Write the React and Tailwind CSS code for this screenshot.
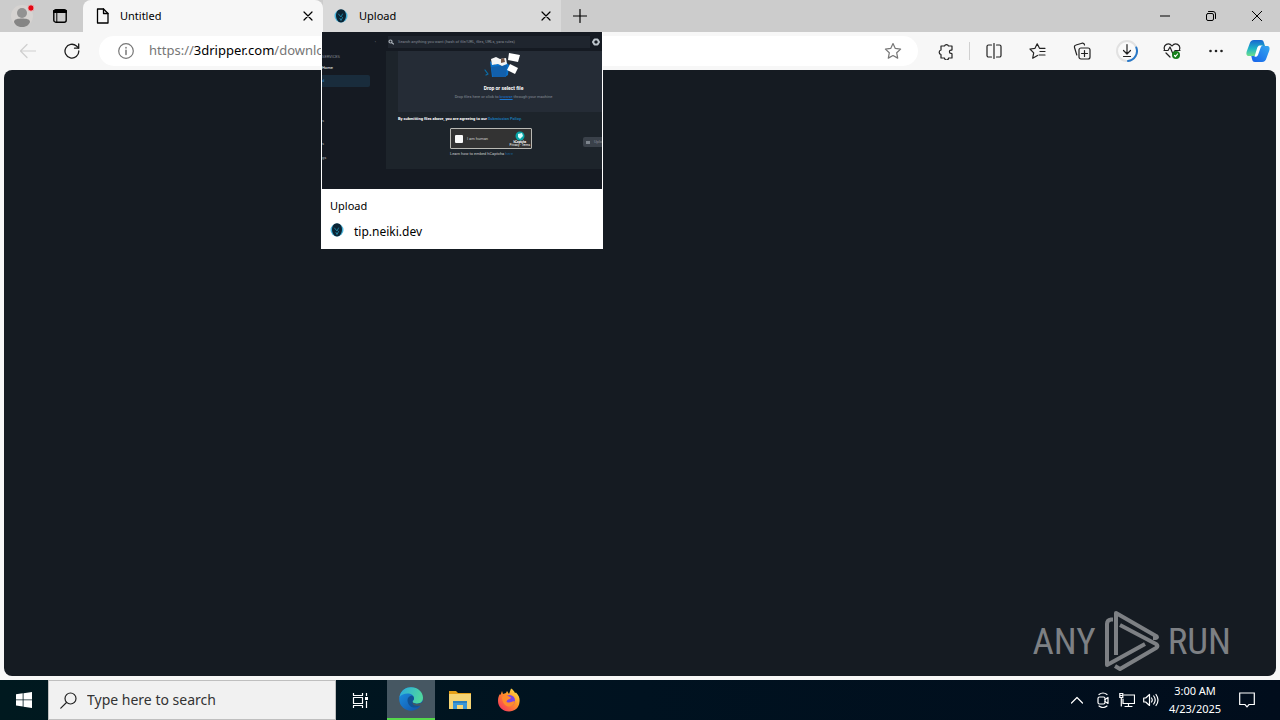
import React from "react";

function Svg({ className = "", size = 16, box, children, ...rest }) {
  const b = box || size;
  return (
    <svg
      className={"shrink-0 " + className}
      width={size}
      height={size}
      viewBox={`0 0 ${b} ${b}`}
      fill="none"
      stroke="currentColor"
      strokeWidth="1.2"
      strokeLinecap="round"
      strokeLinejoin="round"
      aria-hidden="true"
      {...rest}
    >
      {children}
    </svg>
  );
}

function NeikiIcon({ className = "" }) {
  return (
    <Svg size={14} className={className} stroke="none">
      <ellipse cx="7" cy="7" rx="6.500" ry="6.500" fill="#49b5dc" />
      <path d="M7 .2C10 .2 12 3 12 6.500S10 13.500 7 13.500 2 10 2 6.500 4 .2 7 .2Z" fill="#0b2434" />
      <path d="M4.500 5 7 8l1.500-3M6 9.500l1 2 1.500-3" stroke="#1f86a8" strokeWidth=".9" />
    </Svg>
  );
}

function CloseIcon({ size = 10 }) {
  return (
    <Svg size={size} box={10}>
      <path d="M1 1l8 8M9 1L1 9" />
    </Svg>
  );
}

function TabStrip() {
  return (
    <header className="flex h-8 bg-[#cccccc] text-black">
      <div className="flex w-[83px] shrink-0 items-center">
        <button aria-label="Profile" className="ml-[11px] flex w-6">
          <Svg size={24} stroke="none">
            <circle cx="11" cy="12" r="11" fill="#d6d3d1" />
            <circle cx="11" cy="9" r="5" fill="#929292" />
            <path d="M3 18c0-3 4-3.500 8-3.500s8 .5 8 3.500c-1 3-4 5-8 5s-7-2-8-5Z" fill="#858585" />
            <circle cx="20" cy="4" r="3.200" fill="#e30613" stroke="#e8d6d6" strokeWidth=".8" />
          </Svg>
        </button>
        <button aria-label="Tab actions menu" className="ml-[18px] flex">
          <Svg size={14} strokeWidth="1.400">
            <rect x=".8" y=".8" width="12.400" height="12.400" rx="2" />
            <path d="M1 2.500h12" strokeWidth="3.200" />
            <path d="M3.800 4v9" strokeWidth="1" />
          </Svg>
        </button>
      </div>
      <div className="flex w-60 shrink-0 items-center rounded-t-lg bg-[#f7f7f7] pl-3 pr-[10px]">
        <Svg size={16} strokeWidth="1.300">
          <path d="M2.500 1h6l4.500 4.500V15H2.500Z" />
          <path d="M8.500 1v4.500H13" />
        </Svg>
        <span className="ml-[9px] grow text-[11px]">Untitled</span>
        <button aria-label="Close Untitled" className="flex"><CloseIcon /></button>
      </div>
      <div className="flex w-[238px] shrink-0 items-center bg-[#d9d9d9] pl-[11px] pr-[10px]">
        <NeikiIcon />
        <span className="ml-[11px] grow text-[11px]">Upload</span>
        <button aria-label="Close Upload" className="flex"><CloseIcon /></button>
      </div>
      <button aria-label="New tab" className="ml-3 flex items-center">
        <Svg size={14}><path d="M7 .5v13M.5 7h13" /></Svg>
      </button>
      <div className="ml-auto flex items-center gap-9 pr-[18px]">
        <button aria-label="Minimize"><Svg size={10}><path d="M0 5h10" strokeWidth="1" /></Svg></button>
        <button aria-label="Restore">
          <Svg size={10} strokeWidth="1" overflow="visible">
            <rect x=".5" y="2.500" width="7" height="7" rx="1.500" />
            <path d="M2.500.5H7A2.500 2.500 0 0 1 9.500 3v4.500" />
          </Svg>
        </button>
        <button aria-label="Close window"><Svg size={10} strokeWidth="1"><path d="M0 0l10 10M10 0L0 10" /></Svg></button>
      </div>
    </header>
  );
}

function Copilot() {
  return (
    <Svg size={24} stroke="none">
      <defs>
        <linearGradient id="cpA" x1="0" y1="0" x2="0" y2="1">
          <stop offset="0" stopColor="#1766d1" />
          <stop offset=".55" stopColor="#1fb5c6" />
          <stop offset="1" stopColor="#6fdf8a" />
        </linearGradient>
        <linearGradient id="cpB" x1="1" y1="0" x2="0" y2="1">
          <stop offset="0" stopColor="#35a8ef" />
          <stop offset="1" stopColor="#1660ea" />
        </linearGradient>
      </defs>
      <path d="M8 1h7c2 0 2.500 1 3 3l1 3h-3c-2 0-3 1-3.500 3l-1.500 5c-.5 1.500-1.500 2-3 2H3c-2.500 0-3-2-2.300-4.500L3.500 5C4.300 2.300 5.500 1 8 1Z" fill="url(#cpA)" />
      <path d="M16 23H9c-2 0-2.500-1-3-3l-.7-3H8c2 0 3-1 3.500-3L13 9c.5-1.500 1.500-2 3-2h5c2.500 0 3 2 2.300 4.500L20.500 19c-.8 2.700-2 4-4.500 4Z" fill="url(#cpB)" />
      <path d="M13.500 6.500h4c-2 0-2.500 1-3 2.500L12 16c-.5 1.300-1.500 1.800-3.500 1.800L11 9.500c.5-1.700 1.300-2.700 2.500-3Z" fill="#fff" />
    </Svg>
  );
}

function Toolbar() {
  return (
    <nav className="flex h-[38px] items-center bg-[#f7f7f7] pl-[20px] pr-[10px] text-[#222]">
      <button aria-label="Back" className="flex text-[#cfcfcf]">
        <Svg size={16}><path d="M.5 8h15M7 1.500L.5 8 7 14.500" /></Svg>
      </button>
      <button aria-label="Refresh" className="ml-7 flex text-[#1b1b1b]">
        <Svg size={16} strokeWidth="1.300">
          <path d="M14.800 8A6.900 6.900 0 1 1 12.500 3l2 2" />
          <path d="M14.700 1v4.200h-4.200" />
        </Svg>
      </button>
      <div className="ml-[19px] flex h-[30px] min-w-0 grow items-center rounded-full bg-white pl-[19px] pr-4">
        <Svg size={16} className="text-[#777]">
          <circle cx="8" cy="8" r="7.300" />
          <path d="M8 7.200V11.500M8 4.500v.4" strokeWidth="1.500" />
        </Svg>
        <a href="#address" className="ml-[15px] grow whitespace-nowrap text-[13px] text-[#767676]">
          https://<span className="text-black">3dripper.com</span>/downlo
        </a>
        <button aria-label="Add to favorites" className="flex text-[#777]">
          <Svg size={18}>
            <path d="M9 1.500l2.300 4.900 5.300.7-3.900 3.700 1 5.300L9 13.500l-4.700 2.600 1-5.300L1.400 7.100l5.300-.7Z" />
          </Svg>
        </button>
      </div>
      <button aria-label="Extensions" className="ml-5 flex">
        <Svg size={17}>
          <path d="M3 3h3.500a2.100 2.100 0 0 1 4 0H14v3.800a1 1 0 0 1-1 .4 1.600 1.600 0 0 0 0 3.200 1 1 0 0 1 1 .5V15h-3.500a2 2 0 0 1-4 0H3v-3.500a2.300 2.300 0 0 1 0-4.500Z" />
        </Svg>
      </button>
      <span className="ml-[14px] h-[18px] w-px bg-[#d0d0d0]" />
      <div className="ml-[16px] flex items-center gap-[27px]">
        <button aria-label="Split screen" className="flex">
          <Svg size={16}>
            <path d="M5.500 2H2.500a1.500 1.500 0 0 0-1.500 1.500v9A1.500 1.500 0 0 0 2.500 14H5.500M10.500 2h3A1.500 1.500 0 0 1 15 3.500v9a1.500 1.500 0 0 1-1.500 1.500h-3M8 .5v15" />
          </Svg>
        </button>
        <button aria-label="Favorites" className="flex">
          <Svg size={17}>
            <path d="M8.500 12.500L3.700 15.200l1-5.400L1 6l5-.7L8.200.8l2.300 4.500H16M11 8.500h5M10 12h6" />
          </Svg>
        </button>
        <button aria-label="Collections" className="flex">
          <Svg size={18}>
            <rect x="6" y="6" width="11" height="11" rx="2" />
            <path d="M11.500 8.500v6M8.500 11.500h6M3.800 13L1.500 5.500A2 2 0 0 1 3 3l6-1.800A2 2 0 0 1 11.500 3" />
          </Svg>
        </button>
        <button aria-label="Downloads" className="-mx-[2px] flex">
          <Svg size={22}>
            <circle cx="11" cy="11" r="10" stroke="#e2e2e2" strokeWidth="2" fill="#fafafa" />
            <path d="M20.300 7.500A10 10 0 0 1 12 21" stroke="#2878c8" strokeWidth="2" />
            <path d="M11 4.500v9M7.500 10.500L11 14l3.500-3.500M7.500 16.500h7" />
          </Svg>
        </button>
        <button aria-label="Browser essentials" className="flex">
          <Svg size={18}>
            <path d="M1.500 7.500C0 3 5.500-.5 9 4c3.500-4.500 9-1 7.500 3.500M3 11l4 4M1 8.500h4L7 5l3 7 2-3.500h5" />
            <circle cx="13" cy="13" r="4" fill="#16801b" stroke="none" />
            <path d="M11.500 13.500l1 1 2-2.500" stroke="#fff" />
          </Svg>
        </button>
        <button aria-label="Settings and more" className="flex">
          <Svg size={16} stroke="none">
            <g fill="#222"><circle cx="2.500" cy="8" r="1.300" /><circle cx="8" cy="8" r="1.300" /><circle cx="13.500" cy="8" r="1.300" /></g>
          </Svg>
        </button>
        <button aria-label="Copilot" className="-ml-[5px] flex"><Copilot /></button>
      </div>
    </nav>
  );
}

function Thumbnail() {
  return (
    <div className="flex h-[157px] overflow-hidden bg-[#151a22] text-[4px] leading-[6px] text-[#858c96]" style={{ fontFamily: 'Roboto, "Noto Sans", sans-serif' }}>
      <div className="flex w-16 shrink-0 flex-col pt-[6px]">
        <span className="self-end pr-[10px] leading-[8px]">‹</span>
        <span className="mt-2">SERVICES</span>
        <span className="mt-[5px] text-white">Home</span>
        <span className="mt-1 flex h-3 w-12 items-center rounded-r-xs bg-[#192c3c] text-[#2c86cc]">d</span>
        <span className="mt-[31px] text-[#a8aeb6]">s</span>
        <span className="mt-[17px] text-[#a8aeb6]">s</span>
        <span className="mt-2 text-[#a8aeb6]">gs</span>
      </div>
      <div className="flex min-w-0 grow flex-col">
        <div className="flex h-[19px] items-center pl-[2px]">
          <div className="flex h-3 grow items-center bg-[#1f252e]">
            <Svg size={6} className="text-[#a9b0b8]"><circle cx="2.500" cy="2.500" r="1.500" /><path d="M3.800 3.800L5.500 5" /></Svg>
            <span className="ml-1 whitespace-nowrap">Search anything you want (hash of file/URL, files, URLs, yara rules)</span>
          </div>
          <Svg size={8} className="mx-[2px] text-[#bcc3ca]" strokeWidth="2"><path d="M2.500 1.500h3L7 4 5.500 6.500h-3L1 4Z" /></Svg>
        </div>
        <div className="flex h-[118px] flex-col bg-[#1d242b] pl-3">
          <div className="flex h-[61px] flex-col items-center bg-[#252c36] pl-[7px] pt-px">
            <Svg size={36} className="-mb-[7px] -ml-1" stroke="none">
              <path d="M6 9l4 4 3-3 4 4 5-4 3 3-1 10-3 2H8Z" fill="#0871cb" />
              <path d="M7 15l16-2-1 12H9Z" fill="#1260ac" />
              <path d="M7 7l5-2 4 2 6-1 1 6-5 2-4-2-6 1Z" fill="#f5f5f5" />
              <path d="M17 7l3-1 1 4-4 1Z" fill="#765647" />
              <path d="M25 1l11 2-2 7-10-2ZM26 12l8 4-3 6-8-4Z" fill="#fff" />
              <path d="M1 18l3 4-2 1" stroke="#0a6fac" />
            </Svg>
            <strong className="mt-1 text-[5px] font-bold text-white">Drop or select file</strong>
            <span className="mt-[3px]">Drop files here or click to <a href="#browse" className="text-[#1976d2] underline">browse</a> through your machine</span>
          </div>
          <p className="mt-1 font-bold text-white">By submitting files above, you are agreeing to our <a href="#policy" className="text-[#1976b2]">Submission Policy.</a></p>
          <div className="flex">
            <div className="ml-[52px] mt-[6px] w-[82px] shrink-0">
              <div className="flex h-[21px] items-center rounded-[1px] border border-[#b9b9b4] bg-[#333333] pl-1">
                <input type="checkbox" id="human" className="size-2 appearance-none rounded-[1px] bg-[#fafafa]" />
                <label htmlFor="human" className="ml-1 text-[#c9c9c9]">I am human</label>
                <div className="ml-auto mr-px flex flex-col items-center text-[3px] leading-[3px] text-white">
                  <Svg size={10} stroke="none"><circle cx="5" cy="5" r="4.500" fill="#08a5a7" /><path d="M3 3l4-1 1 3-3 3-2-2Z" fill="#d6ffff" /></Svg>
                  <b>hCaptcha</b><span>Privacy - Terms</span>
                </div>
              </div>
              <p className="mt-[2px] whitespace-nowrap text-[#c9c9c9]">Learn how to embed hCaptcha <a href="#help" className="text-[#175f91]">here</a></p>
            </div>
            <button className="ml-auto mt-[15px] flex h-[10px] w-[19px] items-center gap-1 overflow-hidden rounded-l-[2px] bg-[#3a414a] pl-[3px]"><span className="h-[3px] w-1 shrink-0 bg-[#7d858d]" />Uplo</button>
          </div>
        </div>
      </div>
    </div>
  );
}

function HoverCard() {
  return (
    <aside className="absolute left-[321px] top-8 w-[282px] border-x border-b border-white bg-white text-black">
      <Thumbnail />
      <div className="flex flex-col px-2 pb-1 pt-2">
        <span className="text-[11px] leading-[18px]">Upload</span>
        <div className="mt-[5px] flex items-center">
          <NeikiIcon className="-mt-1" />
          <span className="ml-[10px] text-xs leading-6">tip.neiki.dev</span>
        </div>
      </div>
    </aside>
  );
}

function Watermark() {
  return (
    <div className="absolute bottom-1 right-[45px] flex items-center text-[#7d8084]" style={{ fontFamily: '"Liberation Sans Narrow", "Roboto Condensed", sans-serif' }}>
      <span className="text-[37px] leading-none">ANY</span>
      <svg className="mx-2 shrink-0" width="56" height="62" viewBox="0 0 56 62" fill="none" stroke="currentColor" strokeWidth="4" strokeLinejoin="round" strokeLinecap="butt" aria-hidden="true">
        <path d="M9 9.500H7Q3 10 3 14V55L41 34" />
        <path d="M12 45V3L52 26Q55 28 49 28" />
        <path d="M16 15L52 34Q55 36 52 38L16 59L11 56" />
      </svg>
      <span className="text-[37px] leading-none">RUN</span>
    </div>
  );
}

function Edge() {
  return (
    <Svg size={24} stroke="none">
      <defs>
        <linearGradient id="edT" x1="0" y1="0" x2="1" y2=".3"><stop offset="0" stopColor="#2aa8df" /><stop offset="1" stopColor="#4ed6a0" /></linearGradient>
        <linearGradient id="edB" x1="0" y1="0" x2="1" y2="1"><stop offset="0" stopColor="#1b94e5" /><stop offset="1" stopColor="#124da3" /></linearGradient>
      </defs>
      <circle cx="12" cy="12" r="11.800" fill="url(#edB)" />
      <path d="M.5 10C2 3 7 .2 12 .2c7 0 12 5 12 10.500 0 4-3 6-6.500 6-2.500 0-4-1-4-2s1.500-1.500 1.500-3.500C15 8.500 12 6.500 8.500 6.500 5 6.500 2 8 .5 10Z" fill="url(#edT)" />
      <path d="M8.500 13c0-2 1.500-4 4-4.500 2 .5 2.500 2 2.500 3 0 1.500-1.500 2-1.500 3 0 1.500 3 3 7.500 1.800l1 1C20 20 17 21 14.500 20.500 11 20 8.500 17 8.500 13Z" fill="#125293" />
      <path d="M13.500 14.500c0 2 4 3.500 8.500 1.500l2-1v3l-2 1C21 18.500 18 19 16 18.500c-2-.5-3-2.500-2.500-4Z" fill="#465762" />
    </Svg>
  );
}

function Explorer() {
  return (
    <Svg size={24} stroke="none">
      <path d="M1 3h7l2 2h13v5H1Z" fill="#e5a018" />
      <path d="M1 6h22v15H1Z" fill="#f5d474" />
      <path d="M5 13h14v8h-4v-4H9v4H5Z" fill="#3a96d6" />
      <path d="M5 13h14v2H5Z" fill="#2a7fbe" />
    </Svg>
  );
}

function Firefox() {
  return (
    <Svg size={24} stroke="none">
      <defs>
        <linearGradient id="ffA" x1="1" y1="0" x2=".1" y2="1"><stop offset="0" stopColor="#fff44f" /><stop offset=".45" stopColor="#ff9527" /><stop offset="1" stopColor="#f52d62" /></linearGradient>
      </defs>
      <path d="M5 3l1 3 3-1 1-2 2 3 2-5.500c2 1 3 2.500 4 4.500l1-.5c3 3 4 6 3.500 9.500C22 20 17.500 23.500 12 23.500 6 23.500 1 19 1 13c0-3 .5-5 2-7l.5 1Z" fill="url(#ffA)" />
      <circle cx="12.500" cy="12.500" r="5.500" fill="#7945e5" />
      <path d="M5 9c2-2 5-2 7-.5l2 1c0 1.500-3 1.500-4 3s0 2 2 2 4-2 6-1c-1 4-4 5.500-7 5-4-1-6-5-6-9.500Z" fill="#ff8b2c" />
    </Svg>
  );
}

function Taskbar() {
  return (
    <footer className="flex h-10 bg-linear-to-r from-[#00191f] via-[#001220] to-[#010d1c] text-white">
      <button aria-label="Start" className="flex w-12 items-center justify-center">
        <Svg size={16} stroke="none">
          <path d="M0 2.300l6.700-1v6.200H0ZM7.500 1.200L16 0v7.500H7.500ZM0 8.300h6.700v6.300L0 13.600ZM7.500 8.300H16V16l-8.500-1.200Z" fill="#fff" />
        </Svg>
      </button>
      <label htmlFor="search" className="flex w-72 shrink-0 items-center border border-[#bfbfbf] bg-[#f1f1f1] pl-[11px] text-[#222]">
        <Svg size={17} className="text-[#222]"><circle cx="10.500" cy="6.500" r="5.500" /><path d="M6.500 10.500L.8 16.200" /></Svg>
        <input id="search" type="text" aria-label="Search" placeholder="Type here to search" className="ml-[10px] min-w-0 grow bg-transparent text-sm outline-none placeholder:text-[#333]" />
      </label>
      <button aria-label="Task view" className="flex w-[51px] items-center pl-4">
        <Svg size={17} strokeLinecap="butt">
          <path d="M1.500 1v2.500h9V1M1.500 16v-2.500h9V16M1.500 5.500h9v6h-9ZM14.500 1v3M14.500 9v7" />
          <path d="M13 5h3v3h-3Z" fill="#fff" stroke="none" />
        </Svg>
      </button>
      <button aria-label="Microsoft Edge" className="flex w-12 items-center justify-center border-b-2 border-[#55d84b] bg-[#465762]"><Edge /></button>
      <button aria-label="File Explorer" className="ml-px flex w-12 items-center justify-center"><Explorer /></button>
      <button aria-label="Firefox" className="ml-px flex w-12 items-center justify-center"><Firefox /></button>
      <div className="ml-auto flex items-center pr-[25px]">
        <button aria-label="Show hidden icons"><Svg size={12}><path d="M.5 9L6 3.500 11.500 9" /></Svg></button>
        <button aria-label="Meet Now" className="ml-[12px]">
          <Svg size={16}><rect x="3" y="5" width="7" height="7" rx="1.500" /><path d="M10 7.500l3-2v6l-3-2M4 2.500q4-3 8 0M4 14q4 3 8 0" /></Svg>
        </button>
        <button aria-label="Network" className="ml-2">
          <Svg size={16} strokeLinejoin="miter"><path d="M5 3h10.500v8.500H4V7M9.500 11.500V14M6 14.500h7M.8 1.500h3v4h-3ZM2.300 5.500V14M.8 3.500h3" /></Svg>
        </button>
        <button aria-label="Volume" className="ml-2">
          <Svg size={16}><path d="M.7 6h2L6.500 2.500v11L2.700 10h-2ZM8.500 6q1.500 2 0 4M10.700 4q3 4 0 8M13 2.500q4 5.500 0 11" /></Svg>
        </button>
        <div className="ml-[9px] flex w-[54px] flex-col items-center whitespace-nowrap text-[11px] leading-[18px]">
          <time>3:00 AM</time><time>4/23/2025</time>
        </div>
        <button aria-label="Notifications" className="ml-[17px]">
          <Svg size={16} strokeLinejoin="miter"><path d="M.7 1h14.600v11.500H10L8 14.800 6 12.500H.7Z" /></Svg>
        </button>
      </div>
    </footer>
  );
}

export default function App() {
  return (
    <div className="relative flex min-h-screen flex-col bg-[#f7f7f7]" style={{ fontFamily: '"Noto Sans", "Open Sans", sans-serif' }}>
      <TabStrip />
      <Toolbar />
      <main className="relative mx-1 mb-1 grow rounded-lg bg-[#151b22]"><Watermark /></main>
      <HoverCard />
      <Taskbar />
    </div>
  );
}
